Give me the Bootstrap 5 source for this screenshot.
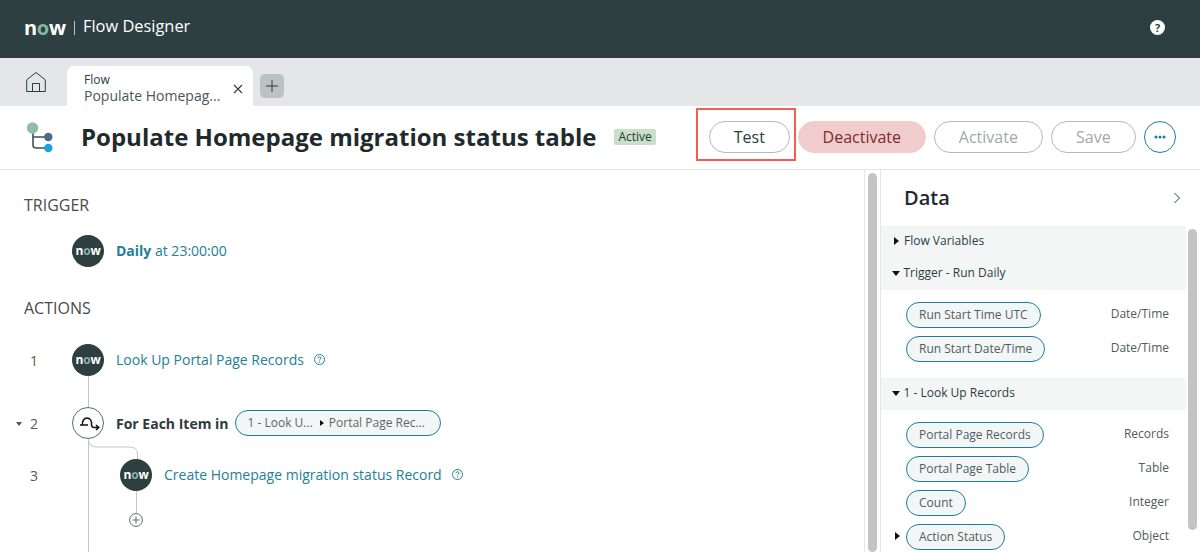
<!DOCTYPE html>
<html lang="en">
<head>
<meta charset="UTF-8">
<meta name="viewport" content="width=device-width, initial-scale=1.0">
<title>Flow Designer</title>
<link href="https://cdn.jsdelivr.net/npm/bootstrap@5.3.2/dist/css/bootstrap.min.css" rel="stylesheet">
<style>
html, body { height: 552px; overflow: hidden; }
body { font-family: "Open Sans", "Liberation Sans", sans-serif; color: #293e40; background: #fff; }
.top-bar { height: 58px; background: #2d3f41; color: #fff; padding: 0 35px 4px 24px; }
.now-big { font: 700 20px/1 "Open Sans", sans-serif; letter-spacing: -.3px; width: 42px; position: relative; top: 1px; }
.now-big i, .now-mini i { font-style: normal; color: #80b9a0; }
.top-sep { width: 1px; height: 14px; background: #b9c2c3; margin: 2px 8px 0; }
.top-title { font-size: 16.4px; font-weight: 500; position: relative; top: -1px; }
.help-dot { width: 15px; height: 15px; border-radius: 50%; background: #fff; color: #2d3f41; font: 700 11px/15px "Open Sans", sans-serif; text-align: center; }
.tab-bar { height: 48px; background: #e4e6e7; align-items: flex-end; }
.home-cell { width: 67px; height: 48px; padding: 14px 0 0 26px; }
.flow-tab { width: 186px; height: 40px; background: #fff; border-radius: 7px 7px 0 0; padding: 6px 10px 0 17px; }
.tab-a { font-size: 12px; line-height: 15px; color: #293e40; }
.tab-b { font-size: 14px; line-height: 17px; color: #4a5658; white-space: nowrap; }
.tab-close { margin-top: 12px; flex: none; }
.add-tab { width: 24px; height: 24px; background: #bcc1c4; border-radius: 5px; margin: 0 0 8px 7px; }
.title-row { height: 64px; border-bottom: 1px solid #e4e6e7; padding: 0 24px 1px 26px; }
.flow-name { font-size: 24px; font-weight: 700; color: #1f2a2c; margin: 0 0 0 27px; line-height: 32px; white-space: nowrap; }
.state-tag { background: #c8dfc9; color: #2e3a34; font-size: 12px; font-weight: 400; line-height: 16px; padding: 0 4px; border-radius: 2px; margin-left: 18px; }
.act-btn { height: 32px; font-size: 16px; line-height: 30px; padding: 0; border-radius: 16px; background: #fff; border: 1px solid #b5b9ba; color: #293e40; }
.act-btn:disabled { opacity: 1; background: #fff; border-color: #b5b9ba; color: #a3a8a9; }
.w-test { width: 81px; }
.w-deact { width: 128px; background: #f0cccc; border-color: #f0cccc; color: #7e2a2a; margin-left: 8px; }
.w-act { width: 109px; margin-left: 8px; }
.w-save { width: 85px; margin-left: 8px; }
.more-btn { width: 32px; height: 32px; margin-left: 8px; border-radius: 50%; border: 1px solid #1f7d96; background: #fff; color: #1f7d96; padding: 0; }
.test-mark { position: relative; margin-left: 53px; }
.test-box { position: absolute; left: -13px; top: -13px; width: 100px; height: 53px; border: 2px solid #f0604f; pointer-events: none; }
.work-area { height: 382px; }
.canvas-pane { width: 865px; border-right: 1px solid #e4e6e7; padding: 24px 0 0 24px; position: relative; overflow: hidden; }
.sect-label { font-size: 16px; font-weight: 500; line-height: 22px; color: #4a4a4a; margin: 0; }
.step-row { height: 32px; position: relative; }
.step-num { width: 18px; font-size: 14px; color: #4f5b5d; text-align: center; margin-left: 1px; margin-right: 29px; position: relative; }
.step-caret { position: absolute; left: -9px; top: 9px; border: 3.5px solid transparent; border-top: 4px solid #4a5658; }
.step-disc { width: 32px; height: 32px; border-radius: 50%; flex: none; position: relative; z-index: 1; }
.sub-disc { margin-left: 48px; }
.now-mini { background: #2d3f41; color: #fff; font: 700 12px/32px "Open Sans", sans-serif; text-align: center; letter-spacing: -.2px; }
.loop-disc { background: #fff; border: 1px solid #5f6b6d; }
.step-link { color: #238096; font-size: 14px; text-decoration: none; margin-left: 12px; white-space: nowrap; position: relative; top: -1px; }
.step-bold { font-weight: 700; font-size: 14px; color: #2e3a3c; margin-left: 12px; white-space: nowrap; }
.tip-icon { margin-left: 10px; position: relative; top: -1px; }
.path-pill { height: 26px; width: 206px; border: 1px solid #1f7d96; border-radius: 13px; background: #f3f6f6; color: #5d6769; font-size: 12px; margin-left: 6px; padding-left: 12px; white-space: nowrap; }
.path-tri { width: 0; height: 0; border-left: 4px solid #111; border-top: 3px solid transparent; border-bottom: 3px solid transparent; margin: 0 5px 0 7px; }
.wire { position: absolute; background: #c3c6c7; width: 1px; }
.wire-a { left: 88px; top: 206px; height: 32px; }
.wire-b { left: 88px; top: 269px; height: 120px; }
.wire-c { left: 136px; top: 321px; height: 24px; }
.wire-bend { position: absolute; left: 88px; top: 269px; }
.add-step { position: absolute; left: 129px; top: 343px; background: #fff; }
.bar-v { position: absolute; width: 9px; background: #c4c4c4; border-radius: 5px; }
.bar-main { left: 868px; top: 3px; height: 379px; }
.gutter { width: 15px; flex: none; position: relative; }
.data-pane { width: 320px; border-left: 1px solid #e4e6e7; position: relative; overflow: hidden; }
.data-head { height: 56px; padding: 0 19px 0 23px; }
.data-head h2 { font-size: 20px; font-weight: 600; color: #1f2a2c; margin: 0; }
.data-list { width: 305px; }
.data-sect { background: #f4f6f6; height: 32px; font-size: 12px; color: #293e40; padding: 0 0 2px 11px; }
.tri-r { width: 0; height: 0; border-left: 5px solid #111; border-top: 4.5px solid transparent; border-bottom: 4.5px solid transparent; margin: 0 5px 0 2px; }
.tri-d { width: 0; height: 0; border-top: 5px solid #111; border-left: 4.5px solid transparent; border-right: 4.5px solid transparent; margin: 0 3.5px 0 0; }
.data-items { padding: 12px 17px 0 25px; display: flex; flex-direction: column; gap: 8px; }
.data-gap { padding-bottom: 16px; }
.data-item { height: 26px; position: relative; }
.var-pill { height: 26px; line-height: 24px; border: 1px solid #1f7d96; border-radius: 13px; background: #f3f6f6; color: #515c5e; font-size: 12px; padding: 0 12px; }
.var-type { font-size: 12px; color: #4f5b5d; margin-top: -2px; }
.item-tri { position: absolute; left: -13px; top: 8px; }
.bar-data { right: 3px; top: 59px; height: 301px; }
</style>
</head>
<body>
<header class="top-bar d-flex align-items-center">
  <span class="now-big">n<i>o</i>w</span>
  <span class="top-sep"></span>
  <span class="top-title">Flow Designer</span>
  <span class="help-dot ms-auto">?</span>
</header>

<div class="tab-bar d-flex">
  <div class="home-cell">
    <svg class="d-block" width="20" height="20" viewBox="0 0 20 20" fill="none" stroke="#293e40" stroke-width="1"><path d="M.5 8 10 .5 19.500 8M.7 8v11.500h18.600V8M6.500 19.500V11.500h7v8"/></svg>
  </div>
  <div class="flow-tab d-flex justify-content-between">
    <div class="overflow-hidden">
      <div class="tab-a">Flow</div>
      <div class="tab-b">Populate Homepag...</div>
    </div>
    <svg class="tab-close" width="10" height="10" viewBox="0 0 10 10" stroke="#293e40" stroke-width="1.100"><path d="M1 1l8 8M9 1l-8 8"/></svg>
  </div>
  <div class="add-tab d-flex align-items-center justify-content-center">
    <svg width="14" height="14" viewBox="0 0 14 14" stroke="#293e40" stroke-width="1"><path d="M7 1v12M1 7h12"/></svg>
  </div>
</div>

<div class="title-row d-flex align-items-center">
  <svg width="28" height="32" viewBox="0 0 28 32" fill="none" class="flex-shrink-0">
    <path d="M7 7v17q0 3 3 3h10M7.500 16h13" stroke="#3d4f55" stroke-width="1.600"/>
    <circle cx="6.500" cy="7" r="5.700" fill="#8dbfa7"/>
    <circle cx="22.300" cy="16" r="4.200" fill="#4a6a85"/>
    <circle cx="22.300" cy="27" r="4.200" fill="#1e9fe0"/>
  </svg>
  <h1 class="flow-name">Populate Homepage migration status table</h1>
  <span class="badge state-tag">Active</span>
  <div class="test-mark">
    <button class="btn act-btn w-test" type="button">Test</button>
    <span class="test-box"></span>
  </div>
  <button class="btn act-btn w-deact" type="button">Deactivate</button>
  <button class="btn act-btn w-act" type="button" disabled>Activate</button>
  <button class="btn act-btn w-save" type="button" disabled>Save</button>
  <button class="more-btn d-flex align-items-center justify-content-center" type="button">
    <svg width="12" height="4" viewBox="0 0 12 4" fill="#1f7d96"><circle cx="2" cy="2" r="1.500"/><circle cx="6" cy="2" r="1.500"/><circle cx="10" cy="2" r="1.500"/></svg>
  </button>
</div>

<div class="work-area d-flex position-relative">
  <div class="canvas-pane">
    <p class="sect-label">TRIGGER</p>
    <div class="step-row d-flex align-items-center" style="margin-top:19px">
      <span class="step-num"></span>
      <span class="step-disc now-mini">n<i>o</i>w</span>
      <a class="step-link" href="#"><b class="fw-bold">Daily</b> at 23:00:00</a>
    </div>
    <p class="sect-label" style="margin-top:30px">ACTIONS</p>
    <div class="step-row d-flex align-items-center" style="margin-top:25px">
      <span class="step-num">1</span>
      <span class="step-disc now-mini">n<i>o</i>w</span>
      <a class="step-link" href="#">Look Up Portal Page Records</a>
      <svg class="tip-icon" width="11" height="11" viewBox="0 0 11 11" fill="none" stroke="#238096"><circle cx="5.500" cy="5.500" r="5"/><path d="M3.900 4.300q.2-1.500 1.600-1.500t1.500 1.300q0 .8-.9 1.200-.6.300-.6 1.100M5.500 7.600v1"/></svg>
    </div>
    <div class="step-row d-flex align-items-center" style="margin-top:31px">
      <span class="step-num"><span class="step-caret"></span>2</span>
      <span class="step-disc loop-disc">
        <svg class="d-block" width="30" height="30" viewBox="1 1 30 30" fill="none" stroke="#111" stroke-width="1.500"><path d="M8 18h8M10.500 18c-.5-4 1.500-7 4.500-7s5 3 4.500 6c-.2 2 1 3.500 2.500 3.500h4.500M24 18l2.800 2.500-2.800 2.500"/></svg>
      </span>
      <span class="step-bold">For Each Item in</span>
      <span class="path-pill d-flex align-items-center">1 - Look U...<span class="path-tri"></span>Portal Page Rec...</span>
    </div>
    <div class="step-row d-flex align-items-center" style="margin-top:20px">
      <span class="step-num">3</span>
      <span class="step-disc now-mini sub-disc">n<i>o</i>w</span>
      <a class="step-link" href="#">Create Homepage migration status Record</a>
      <svg class="tip-icon" width="11" height="11" viewBox="0 0 11 11" fill="none" stroke="#238096"><circle cx="5.500" cy="5.500" r="5"/><path d="M3.900 4.300q.2-1.500 1.600-1.500t1.500 1.300q0 .8-.9 1.200-.6.300-.6 1.100M5.500 7.600v1"/></svg>
    </div>
    <span class="wire wire-a"></span>
    <span class="wire wire-b"></span>
    <span class="wire wire-c"></span>
    <svg class="wire-bend" width="50" height="24" fill="none" stroke="#c3c6c7"><path d="M.5 0q0 8 8 8h33q8 0 8 8v8"/></svg>
    <svg class="add-step" width="14" height="14" viewBox="0 0 14 14" fill="none" stroke="#5f6b6d"><circle cx="7" cy="7" r="6.400"/><path d="M3.500 7h7M7 3.500v7"/></svg>
  </div>
  <div class="gutter"></div>
  <span class="bar-v bar-main"></span>
  <div class="data-pane">
    <div class="data-head d-flex align-items-center justify-content-between">
      <h2>Data</h2>
      <svg width="8" height="12" viewBox="0 0 8 12" fill="none" stroke="#293e40"><path d="M1.500 1l5 5-5 5"/></svg>
    </div>
    <div class="data-list">
      <div class="data-sect d-flex align-items-center"><span class="tri-r"></span>Flow Variables</div>
      <div class="data-sect d-flex align-items-center"><span class="tri-d"></span>Trigger - Run Daily</div>
      <div class="data-items data-gap">
        <div class="data-item d-flex justify-content-between align-items-center"><span class="var-pill">Run Start Time UTC</span><span class="var-type">Date/Time</span></div>
        <div class="data-item d-flex justify-content-between align-items-center"><span class="var-pill">Run Start Date/Time</span><span class="var-type">Date/Time</span></div>
      </div>
      <div class="data-sect d-flex align-items-center"><span class="tri-d"></span>1 - Look Up Records</div>
      <div class="data-items">
        <div class="data-item d-flex justify-content-between align-items-center"><span class="var-pill">Portal Page Records</span><span class="var-type">Records</span></div>
        <div class="data-item d-flex justify-content-between align-items-center"><span class="var-pill">Portal Page Table</span><span class="var-type">Table</span></div>
        <div class="data-item d-flex justify-content-between align-items-center"><span class="var-pill">Count</span><span class="var-type">Integer</span></div>
        <div class="data-item d-flex justify-content-between align-items-center"><span class="tri-r item-tri"></span><span class="var-pill">Action Status</span><span class="var-type">Object</span></div>
      </div>
    </div>
    <span class="bar-v bar-data"></span>
  </div>
</div>
<script src="https://cdn.jsdelivr.net/npm/bootstrap@5.3.2/dist/js/bootstrap.bundle.min.js"></script>
</body>
</html>
